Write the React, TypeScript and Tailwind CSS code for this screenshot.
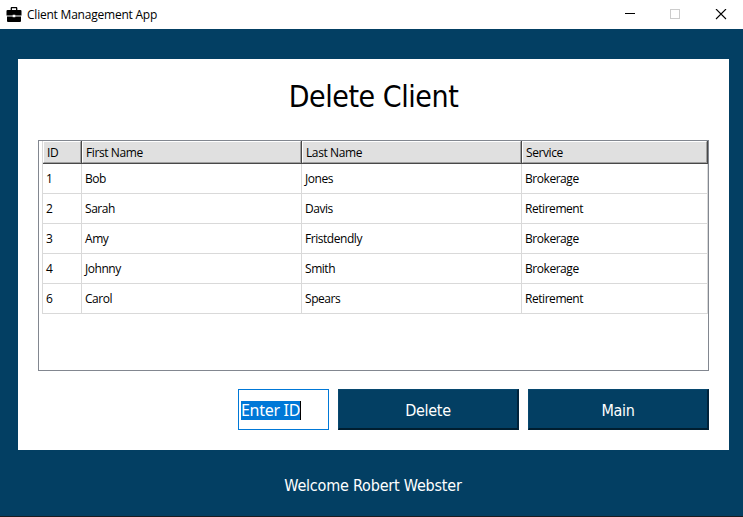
const clients = [
  ["1", "Bob", "Jones", "Brokerage"],
  ["2", "Sarah", "Davis", "Retirement"],
  ["3", "Amy", "Fristdendly", "Brokerage"],
  ["4", "Johnny", "Smith", "Brokerage"],
  ["6", "Carol", "Spears", "Retirement"],
];

const columns = ["ID", "First Name", "Last Name", "Service"];

const columnTemplate = "grid grid-cols-[39px_220px_220px_186px]";

function TitleBar() {
  return (
    <header className="flex h-[29px] items-center bg-white font-['Open_Sans','Noto_Sans',sans-serif] text-xs text-black">
      <svg className="ml-[6px] h-4 w-4" viewBox="0 0 16 16" aria-hidden="true">
        <path d="M5.300 3V1.200Q5.300 .5 6 .5h4q.7 0 .7.700V3" fill="none" stroke="#000" strokeWidth="1.300" />
        <path d="M1.500 3h13q1 0 1 1v4.500H9.300V7.700H6.700v.8H.5V4q0-1 1-1z" />
        <path d="M1 9.400h5.700v.8h2.600v-.8H15V14q0 1-1 1H2q-1 0-1-1z" />
      </svg>
      <span className="ml-[5px] flex-1 whitespace-nowrap tracking-[-0.22px]">Client Management App</span>
      <svg className="mr-4 h-[11px] w-[102px]" viewBox="0 0 102 11" fill="none" shapeRendering="crispEdges" aria-hidden="true">
        <path d="M0 4.500h10" stroke="#000" />
        <rect x="45.500" y=".5" width="9" height="9" stroke="#ccc" />
        <path d="M91 0l10 10M101 0l-10 10" stroke="#000" strokeWidth="1.100" shapeRendering="auto" />
      </svg>
    </header>
  );
}

function ClientTable() {
  return (
    <div className="h-[231px] border border-[#828790] pl-[3px] font-['Open_Sans','Noto_Sans',sans-serif] text-xs text-black">
      <div className="w-[666px] border-l border-[#d9d9d9]">
        <div className={columnTemplate}>
          {columns.map((name) => (
            <div key={name} className="h-[23px] border-r border-b border-[#484848]">
              <div className="flex h-[22px] items-center border-t border-r border-b border-l border-t-white border-r-[#a0a0a0] border-b-[#a0a0a0] border-l-white bg-[#e0e0e0] pt-[2px] pl-[3px] tracking-[-0.4px]">
                {name}
              </div>
            </div>
          ))}
        </div>
        {clients.map((row) => (
          <div key={row[0]} className={columnTemplate}>
            {row.map((value, index) => (
              <div key={index} className="flex h-[30px] items-center border-r border-b border-[#d9d9d9] pl-[3px] tracking-[-0.45px]">
                {value}
              </div>
            ))}
          </div>
        ))}
      </div>
    </div>
  );
}

function ActionButton({ label }: { label: string }) {
  return (
    <button className="h-[41px] w-[181px] border-t border-r-2 border-b-2 border-l border-t-[#07486f] border-r-[#00233a] border-b-[#001e30] border-l-[#07486f] bg-[#033f63] pt-[3px] text-center text-base leading-none tracking-[-0.3px] text-white">
      {label}
    </button>
  );
}

export default function App() {
  return (
    <div className="flex h-[517px] w-[743px] flex-col overflow-hidden border-b border-[#1c1c20] bg-[#033f63] font-['DejaVu_Sans_Condensed','DejaVu_Sans',sans-serif]">
      <TitleBar />
      <main className="mt-[30px] ml-[18px] h-[391px] w-[711px] bg-white px-5">
        <h1 className="flex h-[81px] items-center justify-center pb-[5px] text-[30px] leading-none tracking-[-0.45px] text-black">
          Delete Client
        </h1>
        <ClientTable />
        <div className="mt-[18px] flex justify-end gap-[9px]">
          <div className="flex h-[41px] w-[91px] items-center border border-[#0078d7] bg-white pt-px pl-[2px]">
            <span className="h-[19px] w-[60px] border-r border-black bg-[#0078d7] font-['Noto_Sans',sans-serif] text-base leading-[19px] tracking-[-0.3px] whitespace-nowrap text-white">Enter ID</span>
          </div>
          <ActionButton label="Delete" />
          <ActionButton label="Main" />
        </div>
      </main>
      <footer className="flex flex-1 items-center justify-center pt-[6px] pl-[3px] text-base tracking-[-0.2px] text-white">
        Welcome Robert Webster
      </footer>
    </div>
  );
}
